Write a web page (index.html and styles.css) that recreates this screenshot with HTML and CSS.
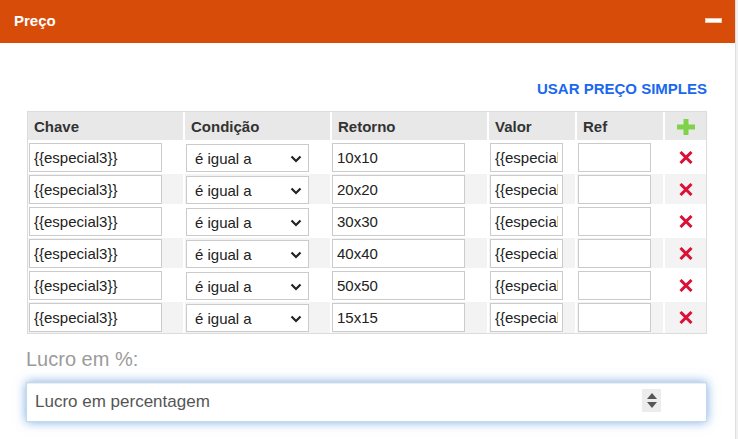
FILE: index.html
```html
<!DOCTYPE html>
<html lang="pt">
<head>
<meta charset="utf-8">
<title>Preço</title>
<link rel="stylesheet" href="styles.css">
</head>
<body>
<div class="panel">
  <div class="panel-head">
    <span class="panel-title">Preço</span>
    <span class="collapse-btn"></span>
  </div>
  <div class="panel-body">
    <div class="actions"><a class="link" href="#">USAR PREÇO SIMPLES</a></div>
    <table class="rules">
      <thead>
        <tr>
          <th class="c-key">Chave</th>
          <th class="c-cond">Condição</th>
          <th class="c-ret">Retorno</th>
          <th class="c-val">Valor</th>
          <th class="c-ref">Ref</th>
          <th class="c-act"><svg class="plus" width="18" height="16" viewBox="0 0 18 16"><rect x="6.5" y="0" width="5" height="16" fill="#7fd24a"/><rect x="0" y="5.5" width="18" height="5" fill="#7fd24a"/></svg></th>
        </tr>
      </thead>
      <tbody>
        <tr>
          <td><input class="inp inp-key" value="{{especial3}}"></td>
          <td><span class="sel-wrap"><select class="sel"><option>é igual a</option></select><svg class="chev" width="12" height="8" viewBox="0 0 12 8"><path d="M1.5 1.5 L6 6 L10.5 1.5" fill="none" stroke="#222" stroke-width="2.2"/></svg></span></td>
          <td><input class="inp inp-ret" value="10x10"></td>
          <td><input class="inp inp-val" value="{{especial3}}"></td>
          <td><input class="inp inp-ref" value=""></td>
          <td class="act"><svg class="del" width="14" height="13" viewBox="0 0 14 13"><path d="M1.5 1 L12.5 12 M12.5 1 L1.5 12" stroke="#dc1036" stroke-width="3"/></svg></td>
        </tr>
        <tr>
          <td><input class="inp inp-key" value="{{especial3}}"></td>
          <td><span class="sel-wrap"><select class="sel"><option>é igual a</option></select><svg class="chev" width="12" height="8" viewBox="0 0 12 8"><path d="M1.5 1.5 L6 6 L10.5 1.5" fill="none" stroke="#222" stroke-width="2.2"/></svg></span></td>
          <td><input class="inp inp-ret" value="20x20"></td>
          <td><input class="inp inp-val" value="{{especial3}}"></td>
          <td><input class="inp inp-ref" value=""></td>
          <td class="act"><svg class="del" width="14" height="13" viewBox="0 0 14 13"><path d="M1.5 1 L12.5 12 M12.5 1 L1.5 12" stroke="#dc1036" stroke-width="3"/></svg></td>
        </tr>
        <tr>
          <td><input class="inp inp-key" value="{{especial3}}"></td>
          <td><span class="sel-wrap"><select class="sel"><option>é igual a</option></select><svg class="chev" width="12" height="8" viewBox="0 0 12 8"><path d="M1.5 1.5 L6 6 L10.5 1.5" fill="none" stroke="#222" stroke-width="2.2"/></svg></span></td>
          <td><input class="inp inp-ret" value="30x30"></td>
          <td><input class="inp inp-val" value="{{especial3}}"></td>
          <td><input class="inp inp-ref" value=""></td>
          <td class="act"><svg class="del" width="14" height="13" viewBox="0 0 14 13"><path d="M1.5 1 L12.5 12 M12.5 1 L1.5 12" stroke="#dc1036" stroke-width="3"/></svg></td>
        </tr>
        <tr>
          <td><input class="inp inp-key" value="{{especial3}}"></td>
          <td><span class="sel-wrap"><select class="sel"><option>é igual a</option></select><svg class="chev" width="12" height="8" viewBox="0 0 12 8"><path d="M1.5 1.5 L6 6 L10.5 1.5" fill="none" stroke="#222" stroke-width="2.2"/></svg></span></td>
          <td><input class="inp inp-ret" value="40x40"></td>
          <td><input class="inp inp-val" value="{{especial3}}"></td>
          <td><input class="inp inp-ref" value=""></td>
          <td class="act"><svg class="del" width="14" height="13" viewBox="0 0 14 13"><path d="M1.5 1 L12.5 12 M12.5 1 L1.5 12" stroke="#dc1036" stroke-width="3"/></svg></td>
        </tr>
        <tr>
          <td><input class="inp inp-key" value="{{especial3}}"></td>
          <td><span class="sel-wrap"><select class="sel"><option>é igual a</option></select><svg class="chev" width="12" height="8" viewBox="0 0 12 8"><path d="M1.5 1.5 L6 6 L10.5 1.5" fill="none" stroke="#222" stroke-width="2.2"/></svg></span></td>
          <td><input class="inp inp-ret" value="50x50"></td>
          <td><input class="inp inp-val" value="{{especial3}}"></td>
          <td><input class="inp inp-ref" value=""></td>
          <td class="act"><svg class="del" width="14" height="13" viewBox="0 0 14 13"><path d="M1.5 1 L12.5 12 M12.5 1 L1.5 12" stroke="#dc1036" stroke-width="3"/></svg></td>
        </tr>
        <tr>
          <td><input class="inp inp-key" value="{{especial3}}"></td>
          <td><span class="sel-wrap"><select class="sel"><option>é igual a</option></select><svg class="chev" width="12" height="8" viewBox="0 0 12 8"><path d="M1.5 1.5 L6 6 L10.5 1.5" fill="none" stroke="#222" stroke-width="2.2"/></svg></span></td>
          <td><input class="inp inp-ret" value="15x15"></td>
          <td><input class="inp inp-val" value="{{especial3}}"></td>
          <td><input class="inp inp-ref" value=""></td>
          <td class="act"><svg class="del" width="14" height="13" viewBox="0 0 14 13"><path d="M1.5 1 L12.5 12 M12.5 1 L1.5 12" stroke="#dc1036" stroke-width="3"/></svg></td>
        </tr>
      </tbody>
    </table>
    <label class="lbl" for="lucro">Lucro em %:</label>
    <div class="num-wrap">
      <input id="lucro" class="num" placeholder="Lucro em percentagem">
      <span class="spin"><span class="up"></span><span class="down"></span></span>
    </div>
  </div>
</div>
</body>
</html>
```

FILE: styles.css
```css
* { box-sizing: border-box; }
html, body { margin: 0; padding: 0; background: #fff; }
body {
  font-family: "Liberation Sans", Arial, sans-serif;
  color: #333;
  width: 738px;
  height: 439px;
  overflow: hidden;
  border-right: 2px solid #f0f0f0;
}
.panel {
  width: 736px;
  height: 439px;
  border-right: 1px solid #dedede;
}
.panel-head {
  height: 43px;
  background: #d84c09;
  display: flex;
  align-items: center;
  justify-content: space-between;
  padding: 0 13px 0 14px;
}
.panel-title {
  color: #fff;
  font-weight: bold;
  font-size: 15px;
  margin-top: -3px;
}
.collapse-btn {
  width: 17px;
  height: 5px;
  background: #fff;
  border: 1px solid #f3c7ae;
  margin-top: -3px;
}
.panel-body {
  padding: 38px 0 0 26px;
  width: 707px;
}
.actions {
  text-align: right;
  height: 16px;
  line-height: 16px;
}
.link {
  color: #1a68ee;
  font-weight: bold;
  font-size: 15px;
  text-decoration: none;
}
.rules {
  margin: 14px 0 0 1px;
  width: 680px;
  border: 1px solid #dcdcdc;
  border-collapse: separate;
  border-spacing: 0;
  table-layout: fixed;
}
.rules th, .rules td {
  border-right: 2px solid #fff;
  border-bottom: 2px solid #fff;
  padding: 0;
}
.rules th:last-child, .rules td:last-child { border-right: 0; }
.rules tbody tr:last-child td { border-bottom: 0; }
.rules th {
  background: #e8e8e8;
  height: 30px;
  text-align: left;
  font-size: 15px;
  font-weight: bold;
  color: #333;
  padding-left: 6px;
  padding-top: 1px;
}
.rules th.c-act { text-align: center; padding: 2px 0 0 0; }
.plus { display: block; margin: 0 auto; }
.c-key { width: 157px; }
.c-cond { width: 147px; }
.c-ret { width: 157px; }
.c-val { width: 88px; }
.c-ref { width: 88px; }
.c-act { width: 41px; }
.rules td {
  height: 32px;
  padding: 1px 0 0 1px;
  vertical-align: top;
}
.rules tbody tr:last-child td { height: 31px; }
.rules tbody tr:nth-child(even) td { background: #f3f3f3; }
.rules td.act { text-align: center; padding: 9px 0 0 0; }
.del { display: block; margin: 0 auto 0 14px; }
.inp {
  display: block;
  height: 29px;
  border: 1px solid #cbcbcb;
  background: #fff;
  font-family: "Liberation Sans", Arial, sans-serif;
  font-size: 15px;
  color: #222;
  padding: 0 4px;
  margin: 0;
  outline: none;
}
.inp-key { width: 133px; }
.inp-ret { width: 133px; margin-left: -1px; }
.inp-val { width: 73px; }
.inp-ref { width: 73px; }
.sel-wrap {
  position: relative;
  display: block;
  width: 123px;
  height: 28px;
  margin-top: 1px;
}
.sel {
  appearance: none;
  -webkit-appearance: none;
  width: 123px;
  height: 28px;
  border: 1px solid #cbcbcb;
  border-radius: 0;
  background: #fff;
  font-family: "Liberation Sans", Arial, sans-serif;
  font-size: 15px;
  color: #222;
  padding: 0 0 0 8px;
  margin: 0;
  outline: none;
}
.chev {
  position: absolute;
  right: 7px;
  top: 11px;
  pointer-events: none;
}
.lbl {
  display: block;
  margin-top: 14px;
  font-size: 20px;
  line-height: 23px;
  color: #9b9b9b;
}
.num-wrap {
  position: relative;
  margin-top: 11px;
  width: 681px;
}
.num {
  display: block;
  width: 681px;
  height: 40px;
  border: 1px solid #c4d9ec;
  box-shadow: inset 0 1px 1px rgba(0,0,0,.075), 0 0 10px rgba(90,150,220,.8);
  font-family: "Liberation Sans", Arial, sans-serif;
  font-size: 17px;
  color: #555;
  padding: 0 8px;
  outline: none;
  margin: 0;
}
.num::placeholder { color: #555; }
.spin {
  position: absolute;
  right: 46px;
  top: 7px;
  width: 19px;
  height: 23px;
  background: #ececec;
  display: flex;
  flex-direction: column;
  align-items: center;
  justify-content: center;
  gap: 3px;
}
.spin .up {
  width: 0; height: 0;
  border-left: 5px solid transparent;
  border-right: 5px solid transparent;
  border-bottom: 6px solid #555;
}
.spin .down {
  width: 0; height: 0;
  border-left: 5px solid transparent;
  border-right: 5px solid transparent;
  border-top: 6px solid #555;
}
```
